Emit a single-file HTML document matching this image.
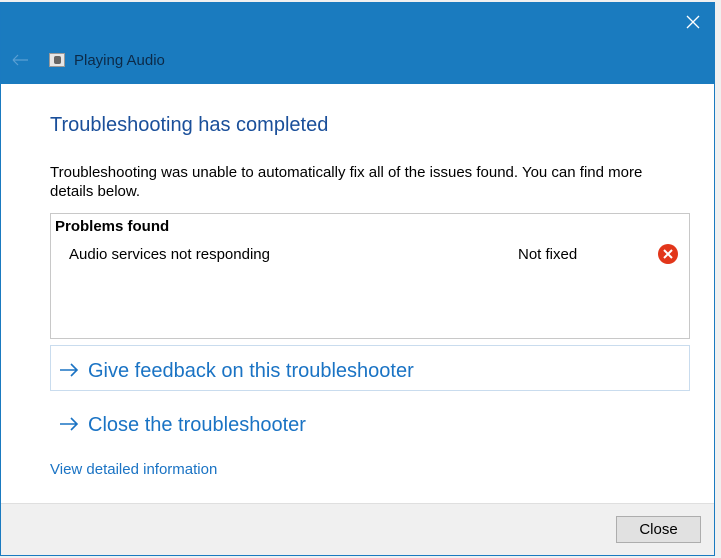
<!DOCTYPE html>
<html><head><style>
*{margin:0;padding:0;box-sizing:border-box}
body{width:721px;height:558px;background:#f0f0f0;position:relative;overflow:hidden;font-family:"Segoe UI","Liberation Sans",sans-serif}
.win{position:absolute;left:0;top:2px;width:715px;height:554px;background:#fff;border:1px solid #1a7ac0}
.hdr{position:absolute;left:0;top:0;width:713px;height:81px;background:#1a7bbf}
.t{position:absolute;font-size:15px;color:#000;white-space:nowrap}
</style></head><body>
<div class="win">
<div class="hdr">
 <svg style="position:absolute;left:10px;top:51px" width="18" height="12"><path d="M2 6H17M2 6L7 1M2 6L7 11" stroke="#5a9fd4" stroke-width="1.2" fill="none"/></svg>
 <div style="position:absolute;left:48px;top:50px;width:16px;height:14px;background:#e6e6e6;border:1px solid #999"><div style="margin:2px 4px;width:7px;height:8px;background:#666;border-radius:2px"></div></div>
 <div class="t" style="left:73px;top:49px;font-size:15px;color:#0c2a48">Playing Audio</div>
 <svg style="position:absolute;left:685px;top:12px" width="14" height="14"><path d="M1 1L13 13M13 1L1 13" stroke="#fff" stroke-width="1.3"/></svg>
</div>
<div class="t" style="left:49px;top:111px;font-size:20px;color:#1a4f9a">Troubleshooting has completed</div>
<div class="t" style="left:49px;top:160px;line-height:19px">Troubleshooting was unable to automatically fix all of the issues found. You can find more<br>details below.</div>
<div style="position:absolute;left:49px;top:210px;width:640px;height:126px;border:1px solid #c8c8c8">
 <div class="t" style="left:4px;top:4px;font-weight:bold">Problems found</div>
 <div class="t" style="left:18px;top:32px">Audio services not responding</div>
 <div class="t" style="left:467px;top:32px">Not fixed</div>
 <div style="position:absolute;left:607px;top:30px;width:20px;height:20px;border-radius:50%;background:#e2361a"><svg width="20" height="20"><path d="M6 6L14 14M14 6L6 14" stroke="#fff" stroke-width="2"/></svg></div>
</div>
<div style="position:absolute;left:49px;top:342px;width:640px;height:46px;border:1px solid #c9dcee"></div>
<svg style="position:absolute;left:58px;top:360px" width="20" height="14"><path d="M1 7H18M12 1L18 7L12 13" stroke="#1a73c4" stroke-width="1.6" fill="none"/></svg>
<div class="t" style="left:87px;top:357px;font-size:20px;color:#1a73c4">Give feedback on this troubleshooter</div>
<svg style="position:absolute;left:58px;top:414px" width="20" height="14"><path d="M1 7H18M12 1L18 7L12 13" stroke="#1a73c4" stroke-width="1.6" fill="none"/></svg>
<div class="t" style="left:87px;top:411px;font-size:20px;color:#1a73c4">Close the troubleshooter</div>
<div class="t" style="left:49px;top:458px;color:#1a73c4">View detailed information</div>
<div style="position:absolute;left:0;top:500px;width:713px;height:52px;background:#f0f0f0;border-top:1px solid #dfdfdf"></div>
<div style="position:absolute;left:615px;top:513px;width:85px;height:27px;background:#e1e1e1;border:1px solid #adadad;text-align:center;line-height:26px;font-size:15px">Close</div>
</div>
</body></html>
